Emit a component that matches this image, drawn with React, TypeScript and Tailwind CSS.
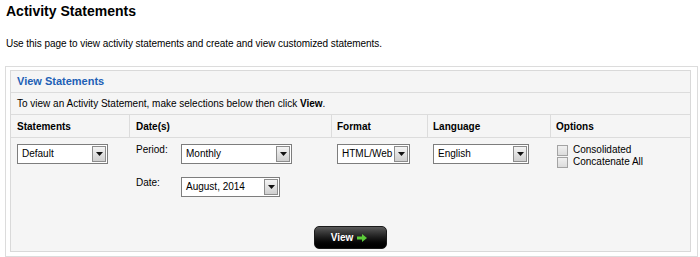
import React from 'react';

type SelectProps = {
  value: string;
  className: string;
};

// old-style select box with the grey arrow button on the right
const FakeSelect = ({ value, className }: SelectProps) => {
  return (
    <div className={`flex h-[20px] items-stretch border border-[#7d7d7d] bg-white p-[1px] ${className}`}>
      <div className="flex flex-1 items-center overflow-hidden whitespace-nowrap pl-[3px] text-[10px] leading-[12px] text-black">
        {value}
      </div>
      <div className="flex w-[14px] items-center justify-center border border-[#8c8c8c] bg-gradient-to-b from-[#f4f4f4] to-[#cfcfcf]">
        <svg width="7" height="4" viewBox="0 0 7 4">
          <polygon points="0,0 7,0 3.5,4" fill="#111" />
        </svg>
      </div>
    </div>
  );
};

const Checkbox = ({ label }: { label: string }) => {
  return (
    <label className="flex h-[12px] items-center gap-[5px]">
      <span className="h-[11px] w-[11px] border border-[#a3a3a3] bg-gradient-to-b from-[#f0f0f0] to-[#dcdcdc]" />
      <span className="text-[10px] leading-[12px] text-black">{label}</span>
    </label>
  );
};

const App = () => {
  return (
    <div className="h-[257px] w-[700px] overflow-hidden bg-white font-['Liberation_Sans',Arial,sans-serif] text-black">
      <h1 className="pl-[6px] pt-[3px] text-[14px] font-bold leading-[16px]">Activity Statements</h1>
      <p className="mt-[19px] pl-[6px] text-[10px] leading-[12px] tracking-[-0.005em]">
        Use this page to view activity statements and create and view customized statements.
      </p>

      <div className="ml-[5px] mt-[16px] w-[693px] border border-[#dcdcdc] pb-[4px] pl-[4px] pr-[6px] pt-[3px]">
        <div className="border border-[#d9d9d9] bg-[#f5f5f5]">
          {/* panel header */}
          <div className="flex h-[22px] items-center border-b border-[#dcdcdc] pl-[6px] text-[11px] font-bold text-[#2160b5]">
            View Statements
          </div>
          <div className="flex h-[22px] items-center border-b border-[#dcdcdc] pl-[6px] text-[10px]">
            To view an Activity Statement, make selections below then click&nbsp;<span className="font-bold">View</span>.
          </div>

          {/* column headings */}
          <div className="grid h-[23px] grid-cols-[119px_202px_96px_123px_1fr] border-b border-[#dcdcdc] text-[10px] font-bold">
            <div className="flex items-center border-r border-[#dcdcdc] pl-[6px]">Statements</div>
            <div className="flex items-center border-r border-[#dcdcdc] pl-[6px]">Date(s)</div>
            <div className="flex items-center border-r border-[#dcdcdc] pl-[5px]">Format</div>
            <div className="flex items-center border-r border-[#dcdcdc] pl-[5px]">Language</div>
            <div className="flex items-center pl-[5px]">Options</div>
          </div>

          {/* selections */}
          <div className="grid grid-cols-[119px_202px_96px_123px_1fr] pt-[6px]">
            <div className="pl-[6px]">
              <FakeSelect value="Default" className="w-[91px]" />
            </div>
            <div className="flex flex-col gap-[13px] pl-[6px]">
              <div className="flex items-start">
                <span className="w-[45px] text-[10px] leading-[12px]">Period:</span>
                <FakeSelect value="Monthly" className="w-[111px]" />
              </div>
              <div className="flex items-start">
                <span className="w-[45px] text-[10px] leading-[12px]">Date:</span>
                <FakeSelect value="August, 2014" className="w-[99px]" />
              </div>
            </div>
            <div className="pl-[5px]">
              <FakeSelect value="HTML/Web" className="w-[73px]" />
            </div>
            <div className="pl-[5px]">
              <FakeSelect value="English" className="w-[96px]" />
            </div>
            <div className="flex flex-col pl-[6px]">
              <Checkbox label="Consolidated" />
              <Checkbox label="Concatenate All" />
            </div>
          </div>

          <div className="flex justify-center pb-[2px] pt-[29px]">
            <button className="flex h-[23px] w-[73px] items-center justify-center gap-[4px] rounded-[5px] border border-[#1a1a1a] bg-gradient-to-b from-[#5a5a5a] via-[#1c1c1c] to-black pr-[3px] text-[10px] font-bold text-white">
              View
              <svg width="10" height="8" viewBox="0 0 10 8">
                <polygon points="0,2.5 5,2.5 5,0 10,4 5,8 5,5.5 0,5.5" fill="#5ccc3a" />
              </svg>
            </button>
          </div>
        </div>
      </div>
    </div>
  );
};

export default App;
